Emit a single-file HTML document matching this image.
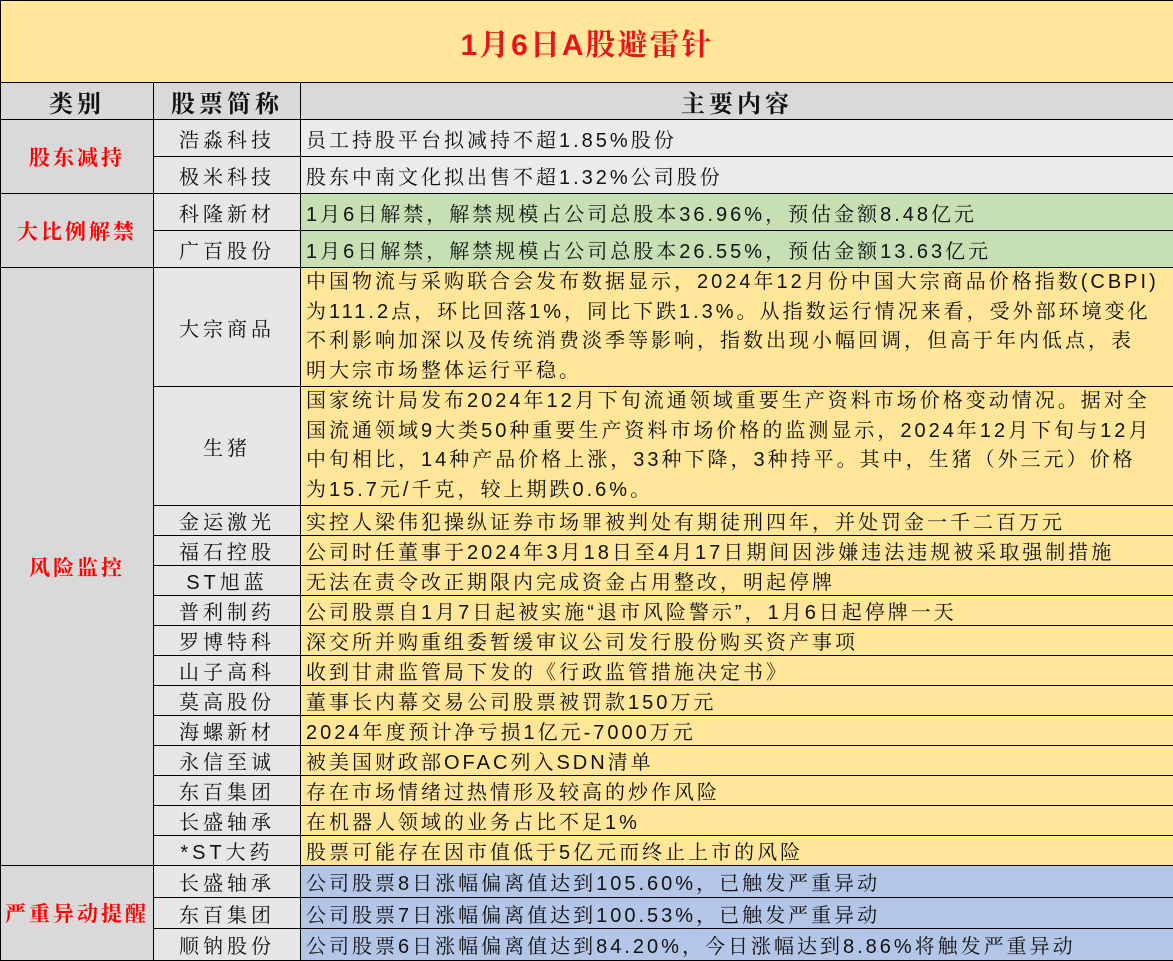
<!DOCTYPE html>
<html><head><meta charset="utf-8"><style>
html,body{margin:0;padding:0;background:#fff}
body{width:1173px;height:961px;overflow:hidden;font-family:"Liberation Sans","Noto Serif CJK SC",serif}
table{border-collapse:collapse;width:1173px;table-layout:fixed}
td{border:1px solid #000;padding:0;font-size:20px;letter-spacing:3px;color:#111;overflow:hidden;white-space:nowrap}
.t{background:#ffe699;height:81px;text-align:center;color:#e8141c;font-weight:bold;font-size:30px;letter-spacing:2px}
.h{background:#d9d9d9;height:36px;text-align:center;font-weight:bold;font-size:24px;letter-spacing:4px}
.c{background:#d9d9d9;text-align:center;color:#ff0000;font-weight:bold;font-size:21px;letter-spacing:3px}
.n{background:#e6e6e6;text-align:center;letter-spacing:4px}
.g{background:#ebebeb;padding-left:5px}
.gr{background:#c6e0b4;padding-left:5px}
.y{background:#ffe699;padding-left:5px}
.b{background:#b4c6e7;padding-left:5px}
.m{line-height:29.5px;white-space:nowrap}
</style></head><body>
<table>
<colgroup><col style="width:153px"><col style="width:147px"><col style="width:873px"></colgroup>
<tr><td colspan="3" class="t">1月6日A股避雷针</td></tr>
<tr><td class="h">类别</td><td class="h">股票简称</td><td class="h">主要内容</td></tr>
<tr style="height:37px"><td class="c" rowspan="2">股东减持</td><td class="n">浩淼科技</td><td class="g">员工持股平台拟减持不超1.85%股份</td></tr>
<tr style="height:37px"><td class="n">极米科技</td><td class="g">股东中南文化拟出售不超1.32%公司股份</td></tr>
<tr style="height:37px"><td class="c" rowspan="2">大比例解禁</td><td class="n">科隆新材</td><td class="gr">1月6日解禁，解禁规模占公司总股本36.96%，预估金额8.48亿元</td></tr>
<tr style="height:37px"><td class="n">广百股份</td><td class="gr">1月6日解禁，解禁规模占公司总股本26.55%，预估金额13.63亿元</td></tr>
<tr style="height:119px"><td class="c" rowspan="14">风险监控</td><td class="n">大宗商品</td><td class="y m">中国物流与采购联合会发布数据显示，2024年12月份中国大宗商品价格指数(CBPI)<br>为111.2点，环比回落1%，同比下跌1.3%。从指数运行情况来看，受外部环境变化<br>不利影响加深以及传统消费淡季等影响，指数出现小幅回调，但高于年内低点，表<br>明大宗市场整体运行平稳。</td></tr>
<tr style="height:118px"><td class="n">生猪</td><td class="y m">国家统计局发布2024年12月下旬流通领域重要生产资料市场价格变动情况。据对全<br>国流通领域9大类50种重要生产资料市场价格的监测显示，2024年12月下旬与12月<br>中旬相比，14种产品价格上涨，33种下降，3种持平。其中，生猪（外三元）价格<br>为15.7元/千克，较上期跌0.6%。</td></tr>
<tr style="height:30px"><td class="n">金运激光</td><td class="y">实控人梁伟犯操纵证券市场罪被判处有期徒刑四年，并处罚金一千二百万元</td></tr>
<tr style="height:30px"><td class="n">福石控股</td><td class="y">公司时任董事于2024年3月18日至4月17日期间因涉嫌违法违规被采取强制措施</td></tr>
<tr style="height:30px"><td class="n">ST旭蓝</td><td class="y">无法在责令改正期限内完成资金占用整改，明起停牌</td></tr>
<tr style="height:30px"><td class="n">普利制药</td><td class="y">公司股票自1月7日起被实施“退市风险警示”，1月6日起停牌一天</td></tr>
<tr style="height:30px"><td class="n">罗博特科</td><td class="y">深交所并购重组委暂缓审议公司发行股份购买资产事项</td></tr>
<tr style="height:30px"><td class="n">山子高科</td><td class="y">收到甘肃监管局下发的《行政监管措施决定书》</td></tr>
<tr style="height:30px"><td class="n">莫高股份</td><td class="y">董事长内幕交易公司股票被罚款150万元</td></tr>
<tr style="height:30px"><td class="n">海螺新材</td><td class="y">2024年度预计净亏损1亿元-7000万元</td></tr>
<tr style="height:30px"><td class="n">永信至诚</td><td class="y">被美国财政部OFAC列入SDN清单</td></tr>
<tr style="height:30px"><td class="n">东百集团</td><td class="y">存在市场情绪过热情形及较高的炒作风险</td></tr>
<tr style="height:30px"><td class="n">长盛轴承</td><td class="y">在机器人领域的业务占比不足1%</td></tr>
<tr style="height:30px"><td class="n">*ST大药</td><td class="y">股票可能存在因市值低于5亿元而终止上市的风险</td></tr>
<tr style="height:32px"><td class="c" rowspan="3">严重异动提醒</td><td class="n">长盛轴承</td><td class="b">公司股票8日涨幅偏离值达到105.60%，已触发严重异动</td></tr>
<tr style="height:31px"><td class="n">东百集团</td><td class="b">公司股票7日涨幅偏离值达到100.53%，已触发严重异动</td></tr>
<tr style="height:32px"><td class="n">顺钠股份</td><td class="b">公司股票6日涨幅偏离值达到84.20%，今日涨幅达到8.86%将触发严重异动</td></tr>
</table>
</body></html>
